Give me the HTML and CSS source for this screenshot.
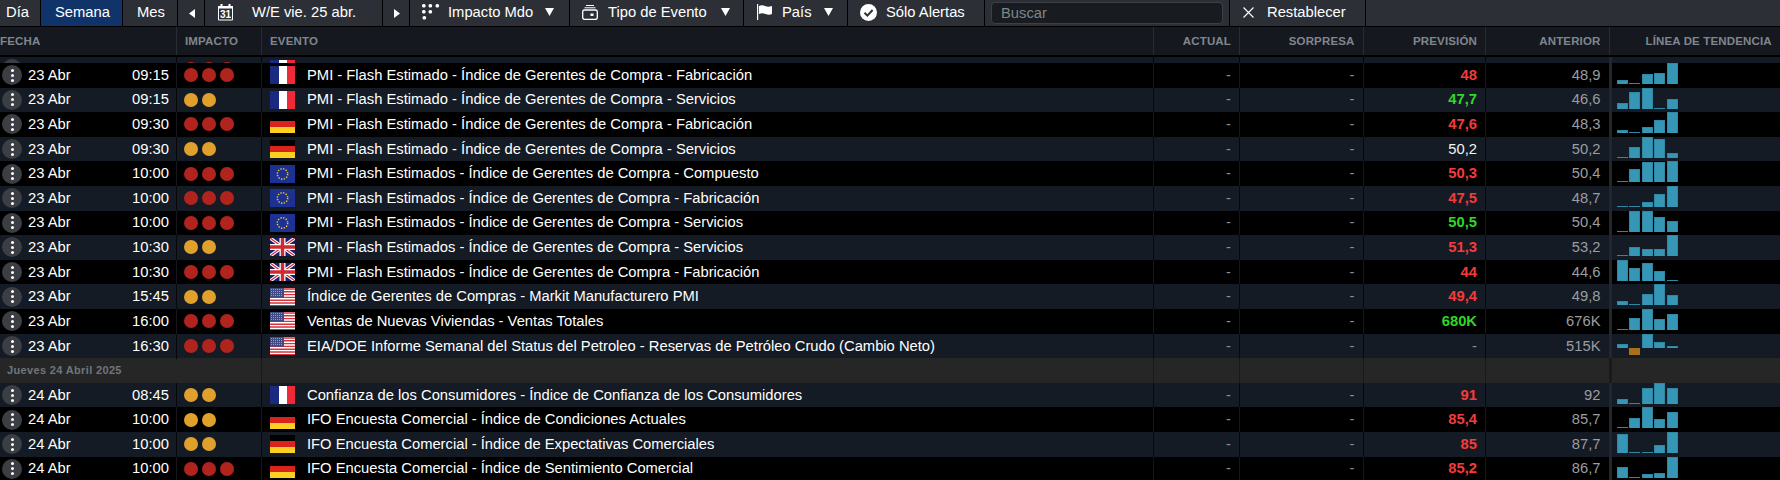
FILE: index.html
```html
<!DOCTYPE html>
<html lang="es">
<head>
    <meta charset="UTF-8">
    <title>Calendario Económico</title>
    <link rel="stylesheet" href="styles.css">
</head>
<body>
<!-- flag and icon symbols -->
<svg class="defs" width="0" height="0">
    <symbol id="fr" viewBox="0 0 25 18"><rect width="9" height="18" fill="#1a2a80"/><rect x="9" width="8" height="18" fill="#fff"/><rect x="17" width="8" height="18" fill="#ee2a39"/></symbol>
    <symbol id="de" viewBox="0 0 25 18"><rect width="25" height="6" fill="#000"/><rect y="6" width="25" height="6" fill="#d8241a"/><rect y="12" width="25" height="6" fill="#fcd022"/></symbol>
    <symbol id="eu" viewBox="0 0 25 18"><rect width="25" height="18" fill="#1c3192"/><circle cx="12.5" cy="9" r="5.2" fill="none" stroke="#f5c91f" stroke-width="1.5" stroke-dasharray="1.3 1.42"/></symbol>
    <symbol id="uk" viewBox="0 0 25 18"><rect width="25" height="18" fill="#1a1f6e"/><path d="M0 0L25 18M25 0L0 18" stroke="#fff" stroke-width="3.4"/><path d="M0 0L25 18M25 0L0 18" stroke="#cf2a30" stroke-width="1.2"/><path d="M12.5 0V18M0 9H25" stroke="#fff" stroke-width="6"/><path d="M12.5 0V18M0 9H25" stroke="#cf2a30" stroke-width="3.4"/></symbol>
    <symbol id="us" viewBox="0 0 25 18"><rect width="25" height="18" fill="#fff"/><path d="M0 1H25M0 3.8H25M0 6.6H25M0 9.4H25M0 12.2H25M0 15H25M0 17.6H25" stroke="#d0343c" stroke-width="1.4"/><rect width="14" height="9.6" fill="#3f4a86"/><path d="M1 1.5H13M1 3.5H13M1 5.5H13M1 7.5H13" stroke="#a9aecb" stroke-width=".8" stroke-dasharray="1 1"/></symbol>
    <symbol id="tri" viewBox="0 0 9 8"><path d="M0 0H9L4.5 8Z" fill="#fff"/></symbol>
</svg>

<div class="toolbar">
    <div class="tb-item">Día</div>
    <div class="tb-item tb-active">Semana</div>
    <div class="tb-item">Mes</div>
    <div class="tb-item tb-arrow"><svg width="6" height="9" viewBox="0 0 6 9"><path d="M6 0V9L0 4.5Z" fill="#fff"/></svg></div>
    <div class="tb-item tb-date">
        <svg class="tb-icon" width="17" height="18" viewBox="0 0 17 18"><path d="M1.5 3.5H15.5V17H1.5Z" fill="none" stroke="#fff"/><path d="M1 3H16V5.5H1ZM3.5 1H5.5V3H3.5ZM11.5 1H13.5V3H11.5Z" fill="#fff"/><text x="8.5" y="15.4" class="cal-num">31</text></svg>
        <span>W/E vie. 25 abr.</span>
    </div>
    <div class="tb-item tb-arrow"><svg width="6" height="9" viewBox="0 0 6 9"><path d="M0 0V9L6 4.5Z" fill="#fff"/></svg></div>
    <div class="tb-item tb-impact">
        <svg class="tb-icon" width="18" height="16" viewBox="0 0 18 16" fill="#fff"><rect x="0" y="0" width="3.6" height="3.6" rx="1.5"/><rect x="6.5" y="0" width="3.6" height="3.6" rx="1.5"/><rect x="13.5" y="0" width="3.6" height="3.6" rx="1.5"/><rect x="0" y="6" width="3.6" height="3.6" rx="1.5"/><rect x="6.5" y="6" width="3.6" height="3.6" rx="1.5"/><rect x="0.5" y="12" width="3.6" height="3.6" rx="1.5"/></svg>
        <span>Impacto Mdo</span>
        <svg class="tri" width="9" height="8"><use href="#tri"/></svg>
    </div>
    <div class="tb-item tb-type">
        <svg class="tb-icon" width="16" height="15" viewBox="0 0 16 15" fill="none" stroke="#fff"><path d="M4 .5H12M2.5 2.8H13.5"/><rect x=".7" y="5" width="14.6" height="9.4" rx="1.8" stroke-width="1.3"/><rect x="8.5" y="8.5" width="3" height="2.5" fill="#fff" stroke="none"/></svg>
        <span>Tipo de Evento</span>
        <svg class="tri" width="9" height="8"><use href="#tri"/></svg>
    </div>
    <div class="tb-item tb-country">
        <svg class="tb-icon" width="17" height="16" viewBox="0 0 17 16"><path d="M1 0H2.2V16H1Z" fill="#fff"/><path d="M3 2Q6 .5 9 2T16 2V10Q13 11.5 9.5 10T3 10Z" fill="#fff"/></svg>
        <span>País</span>
        <svg class="tri" width="9" height="8"><use href="#tri"/></svg>
    </div>
    <div class="tb-item tb-alerts">
        <svg class="tb-icon" width="17" height="17" viewBox="0 0 17 17"><circle cx="8.5" cy="8.5" r="8.5" fill="#fff"/><path d="M4.5 8.7L7.4 11.6L12.6 6" fill="none" stroke="#2c3036" stroke-width="2"/></svg>
        <span>Sólo Alertas</span>
    </div>
    <div class="tb-search"><div class="search-box">Buscar</div></div>
    <div class="tb-item tb-reset">
        <svg class="tb-icon" width="11" height="11" viewBox="0 0 11 11"><path d="M.5 .5L10.5 10.5M10.5 .5L.5 10.5" stroke="#fff" stroke-width="1.1"/></svg>
        <span>Restablecer</span>
    </div>
</div>

<div class="table-head row-grid">
    <div class="th">Fecha</div>
    <div class="th th-impact">Impacto</div>
    <div class="th th-event">Evento</div>
    <div class="th th-num">Actual</div>
    <div class="th th-num">Sorpresa</div>
    <div class="th th-num">Previsión</div>
    <div class="th th-num">Anterior</div>
    <div class="th th-trend">Línea de Tendencia</div>
</div>

<div class="table-body">
    <div class="row row-grid alt cut">
        <div class="c-date"><span class="menu"><i></i></span></div>
        <div class="c-impact"><b class="red"></b><b class="red"></b><b class="red"></b></div>
        <div class="c-event"><svg class="flag" width="25" height="18"><use href="#fr"/></svg></div>
        <div class="c-num"></div><div class="c-num"></div><div class="c-num"></div><div class="c-num"></div>
        <div class="c-trend"><span style="height:9px"></span><span style="height:9px"></span><span style="height:9px"></span><span style="height:9px"></span><span class="neg-up" style="height:9px"></span></div>
    </div>

    <div class="row row-grid">
        <div class="c-date"><span class="menu"><i></i></span><span class="day">23 Abr</span><span class="time">09:15</span></div>
        <div class="c-impact"><b class="red"></b><b class="red"></b><b class="red"></b></div>
        <div class="c-event"><svg class="flag" width="25" height="18"><use href="#fr"/></svg><span>PMI - Flash Estimado - Índice de Gerentes de Compra - Fabricación</span></div>
        <div class="c-num dash">-</div><div class="c-num dash">-</div><div class="c-num neg">48</div><div class="c-num prev">48,9</div>
        <div class="c-trend"><span style="height:4px"></span><span style="height:1px"></span><span style="height:10px"></span><span style="height:11px"></span><span style="height:21px"></span></div>
    </div>
    <div class="row row-grid alt">
        <div class="c-date"><span class="menu"><i></i></span><span class="day">23 Abr</span><span class="time">09:15</span></div>
        <div class="c-impact"><b class="amber"></b><b class="amber"></b></div>
        <div class="c-event"><svg class="flag" width="25" height="18"><use href="#fr"/></svg><span>PMI - Flash Estimado - Índice de Gerentes de Compra - Servicios</span></div>
        <div class="c-num dash">-</div><div class="c-num dash">-</div><div class="c-num pos">47,7</div><div class="c-num prev">46,6</div>
        <div class="c-trend"><span style="height:6px"></span><span style="height:17px"></span><span style="height:21px"></span><span style="height:1px"></span><span style="height:10px"></span></div>
    </div>
    <div class="row row-grid">
        <div class="c-date"><span class="menu"><i></i></span><span class="day">23 Abr</span><span class="time">09:30</span></div>
        <div class="c-impact"><b class="red"></b><b class="red"></b><b class="red"></b></div>
        <div class="c-event"><svg class="flag" width="25" height="18"><use href="#de"/></svg><span>PMI - Flash Estimado - Índice de Gerentes de Compra - Fabricación</span></div>
        <div class="c-num dash">-</div><div class="c-num dash">-</div><div class="c-num neg">47,6</div><div class="c-num prev">48,3</div>
        <div class="c-trend"><span style="height:3px"></span><span style="height:1px"></span><span style="height:6px"></span><span style="height:13px"></span><span style="height:21px"></span></div>
    </div>
    <div class="row row-grid alt">
        <div class="c-date"><span class="menu"><i></i></span><span class="day">23 Abr</span><span class="time">09:30</span></div>
        <div class="c-impact"><b class="amber"></b><b class="amber"></b></div>
        <div class="c-event"><svg class="flag" width="25" height="18"><use href="#de"/></svg><span>PMI - Flash Estimado - Índice de Gerentes de Compra - Servicios</span></div>
        <div class="c-num dash">-</div><div class="c-num dash">-</div><div class="c-num same">50,2</div><div class="c-num prev">50,2</div>
        <div class="c-trend"><span style="height:1px"></span><span style="height:11px"></span><span style="height:21px"></span><span style="height:19px"></span><span style="height:5px"></span></div>
    </div>
    <div class="row row-grid">
        <div class="c-date"><span class="menu"><i></i></span><span class="day">23 Abr</span><span class="time">10:00</span></div>
        <div class="c-impact"><b class="red"></b><b class="red"></b><b class="red"></b></div>
        <div class="c-event"><svg class="flag" width="25" height="18"><use href="#eu"/></svg><span>PMI - Flash Estimados - Índice de Gerentes de Compra - Compuesto</span></div>
        <div class="c-num dash">-</div><div class="c-num dash">-</div><div class="c-num neg">50,3</div><div class="c-num prev">50,4</div>
        <div class="c-trend"><span style="height:1px"></span><span style="height:13px"></span><span style="height:20px"></span><span style="height:20px"></span><span style="height:21px"></span></div>
    </div>
    <div class="row row-grid alt">
        <div class="c-date"><span class="menu"><i></i></span><span class="day">23 Abr</span><span class="time">10:00</span></div>
        <div class="c-impact"><b class="red"></b><b class="red"></b><b class="red"></b></div>
        <div class="c-event"><svg class="flag" width="25" height="18"><use href="#eu"/></svg><span>PMI - Flash Estimados - Índice de Gerentes de Compra - Fabricación</span></div>
        <div class="c-num dash">-</div><div class="c-num dash">-</div><div class="c-num neg">47,5</div><div class="c-num prev">48,7</div>
        <div class="c-trend"><span style="height:1px"></span><span style="height:1px"></span><span style="height:5px"></span><span style="height:13px"></span><span style="height:21px"></span></div>
    </div>
    <div class="row row-grid">
        <div class="c-date"><span class="menu"><i></i></span><span class="day">23 Abr</span><span class="time">10:00</span></div>
        <div class="c-impact"><b class="red"></b><b class="red"></b><b class="red"></b></div>
        <div class="c-event"><svg class="flag" width="25" height="18"><use href="#eu"/></svg><span>PMI - Flash Estimados - Índice de Gerentes de Compra - Servicios</span></div>
        <div class="c-num dash">-</div><div class="c-num dash">-</div><div class="c-num pos">50,5</div><div class="c-num prev">50,4</div>
        <div class="c-trend"><span style="height:1px"></span><span style="height:21px"></span><span style="height:21px"></span><span style="height:15px"></span><span style="height:11px"></span></div>
    </div>
    <div class="row row-grid alt">
        <div class="c-date"><span class="menu"><i></i></span><span class="day">23 Abr</span><span class="time">10:30</span></div>
        <div class="c-impact"><b class="amber"></b><b class="amber"></b></div>
        <div class="c-event"><svg class="flag" width="25" height="18"><use href="#uk"/></svg><span>PMI - Flash Estimados - Índice de Gerentes de Compra - Servicios</span></div>
        <div class="c-num dash">-</div><div class="c-num dash">-</div><div class="c-num neg">51,3</div><div class="c-num prev">53,2</div>
        <div class="c-trend"><span style="height:1px"></span><span style="height:9px"></span><span style="height:7px"></span><span style="height:7px"></span><span style="height:21px"></span></div>
    </div>
    <div class="row row-grid">
        <div class="c-date"><span class="menu"><i></i></span><span class="day">23 Abr</span><span class="time">10:30</span></div>
        <div class="c-impact"><b class="red"></b><b class="red"></b><b class="red"></b></div>
        <div class="c-event"><svg class="flag" width="25" height="18"><use href="#uk"/></svg><span>PMI - Flash Estimados - Índice de Gerentes de Compra - Fabricación</span></div>
        <div class="c-num dash">-</div><div class="c-num dash">-</div><div class="c-num neg">44</div><div class="c-num prev">44,6</div>
        <div class="c-trend"><span style="height:21px"></span><span style="height:13px"></span><span style="height:18px"></span><span style="height:10px"></span><span style="height:1px"></span></div>
    </div>
    <div class="row row-grid alt">
        <div class="c-date"><span class="menu"><i></i></span><span class="day">23 Abr</span><span class="time">15:45</span></div>
        <div class="c-impact"><b class="amber"></b><b class="amber"></b></div>
        <div class="c-event"><svg class="flag" width="25" height="18"><use href="#us"/></svg><span>Índice de Gerentes de Compras - Markit Manufacturero PMI</span></div>
        <div class="c-num dash">-</div><div class="c-num dash">-</div><div class="c-num neg">49,4</div><div class="c-num prev">49,8</div>
        <div class="c-trend"><span style="height:4px"></span><span style="height:1px"></span><span style="height:11px"></span><span style="height:21px"></span><span style="height:10px"></span></div>
    </div>
    <div class="row row-grid">
        <div class="c-date"><span class="menu"><i></i></span><span class="day">23 Abr</span><span class="time">16:00</span></div>
        <div class="c-impact"><b class="red"></b><b class="red"></b><b class="red"></b></div>
        <div class="c-event"><svg class="flag" width="25" height="18"><use href="#us"/></svg><span>Ventas de Nuevas Viviendas - Ventas Totales</span></div>
        <div class="c-num dash">-</div><div class="c-num dash">-</div><div class="c-num pos">680K</div><div class="c-num prev">676K</div>
        <div class="c-trend"><span style="height:1px"></span><span style="height:12px"></span><span style="height:21px"></span><span style="height:11px"></span><span style="height:16px"></span></div>
    </div>
    <div class="row row-grid alt">
        <div class="c-date"><span class="menu"><i></i></span><span class="day">23 Abr</span><span class="time">16:30</span></div>
        <div class="c-impact"><b class="red"></b><b class="red"></b><b class="red"></b></div>
        <div class="c-event"><svg class="flag" width="25" height="18"><use href="#us"/></svg><span>EIA/DOE Informe Semanal del Status del Petroleo - Reservas de Petróleo Crudo (Cambio Neto)</span></div>
        <div class="c-num dash">-</div><div class="c-num dash">-</div><div class="c-num dash">-</div><div class="c-num prev">515K</div>
        <div class="c-trend c-trend-mixed"><span style="height:4px"></span><span class="below" style="height:7px"></span><span style="height:14px"></span><span style="height:6px"></span><span style="height:2px"></span></div>
    </div>

    <div class="row row-grid group">
        <div class="group-title">Jueves 24 Abril 2025</div>
        <div class="c-event"></div>
        <div class="c-num"></div><div class="c-num"></div><div class="c-num"></div><div class="c-num"></div>
        <div class="c-trend"></div>
    </div>

    <div class="row row-grid alt">
        <div class="c-date"><span class="menu"><i></i></span><span class="day">24 Abr</span><span class="time">08:45</span></div>
        <div class="c-impact"><b class="amber"></b><b class="amber"></b></div>
        <div class="c-event"><svg class="flag" width="25" height="18"><use href="#fr"/></svg><span>Confianza de los Consumidores - Índice de Confianza de los Consumidores</span></div>
        <div class="c-num dash">-</div><div class="c-num dash">-</div><div class="c-num neg">91</div><div class="c-num prev">92</div>
        <div class="c-trend"><span style="height:5px"></span><span style="height:1px"></span><span style="height:16px"></span><span style="height:21px"></span><span style="height:16px"></span></div>
    </div>
    <div class="row row-grid">
        <div class="c-date"><span class="menu"><i></i></span><span class="day">24 Abr</span><span class="time">10:00</span></div>
        <div class="c-impact"><b class="amber"></b><b class="amber"></b></div>
        <div class="c-event"><svg class="flag" width="25" height="18"><use href="#de"/></svg><span>IFO Encuesta Comercial - Índice de Condiciones Actuales</span></div>
        <div class="c-num dash">-</div><div class="c-num dash">-</div><div class="c-num neg">85,4</div><div class="c-num prev">85,7</div>
        <div class="c-trend"><span style="height:1px"></span><span style="height:10px"></span><span style="height:21px"></span><span style="height:9px"></span><span style="height:16px"></span></div>
    </div>
    <div class="row row-grid alt">
        <div class="c-date"><span class="menu"><i></i></span><span class="day">24 Abr</span><span class="time">10:00</span></div>
        <div class="c-impact"><b class="amber"></b><b class="amber"></b></div>
        <div class="c-event"><svg class="flag" width="25" height="18"><use href="#de"/></svg><span>IFO Encuesta Comercial - Índice de Expectativas Comerciales</span></div>
        <div class="c-num dash">-</div><div class="c-num dash">-</div><div class="c-num neg">85</div><div class="c-num prev">87,7</div>
        <div class="c-trend"><span style="height:19px"></span><span style="height:1px"></span><span style="height:1px"></span><span style="height:8px"></span><span style="height:21px"></span></div>
    </div>
    <div class="row row-grid">
        <div class="c-date"><span class="menu"><i></i></span><span class="day">24 Abr</span><span class="time">10:00</span></div>
        <div class="c-impact"><b class="red"></b><b class="red"></b><b class="red"></b></div>
        <div class="c-event"><svg class="flag" width="25" height="18"><use href="#de"/></svg><span>IFO Encuesta Comercial - Índice de Sentimiento Comercial</span></div>
        <div class="c-num dash">-</div><div class="c-num dash">-</div><div class="c-num neg">85,2</div><div class="c-num prev">86,7</div>
        <div class="c-trend"><span style="height:11px"></span><span style="height:1px"></span><span style="height:4px"></span><span style="height:5px"></span><span style="height:21px"></span></div>
    </div>
</div>
</body>
</html>
```
FILE: styles.css
```css
* {
    box-sizing: border-box;
}

html, body {
    height: 100%;
}

body {
    margin: 0;
    overflow: hidden;
    background-color: #000;
    color: #fff;
    font-family: "Liberation Sans", Arial, sans-serif;
    font-size: 14.75px;
}

.defs {
    position: absolute;
}

/* Top toolbar */
.toolbar {
    display: flex;
    height: 27px;
    background-color: #2c3036;
    border-bottom: 1px solid #000;
}

.tb-item {
    display: flex;
    align-items: center;
    height: 26px;
    padding-left: 6px;
    padding-bottom: 2px;
    border-right: 1px solid #000;
}

.tb-active {
    width: 82px;
    padding-left: 14px;
    background-color: #10346a;
}

.tb-item:nth-child(1) { width: 41px; }
.tb-item:nth-child(3) { width: 55px; padding-left: 14px; }
.tb-arrow { width: 27px; padding-left: 11px; padding-bottom: 0; }
.tb-date { width: 178px; padding-left: 12px; }
.tb-date span { margin-left: 18px; }
.tb-impact { width: 160px; padding-left: 12px; }
.tb-impact span { margin-left: 8px; }
.tb-impact .tri { margin-left: 12px; }
.tb-type { width: 174px; padding-left: 12px; }
.tb-type span { margin-left: 10px; }
.tb-type .tri { margin-left: 14px; }
.tb-country { width: 104px; padding-left: 12px; }
.tb-country span { margin-left: 9px; }
.tb-country .tri { margin-left: 12px; }
.tb-alerts { width: 137px; padding-left: 12px; }
.tb-alerts span { margin-left: 9px; }
.tb-reset { width: 136px; padding-left: 13px; }
.tb-reset span { margin-left: 13px; }

.tb-icon {
    flex: none;
}

.cal-num {
    fill: #fff;
    font-family: "Liberation Sans", Arial, sans-serif;
    font-size: 10px;
    font-weight: bold;
    text-anchor: middle;
}

.tb-search {
    width: 245px;
    height: 26px;
    padding: 2px 6px 2px 6px;
    border-right: 1px solid #000;
}

.search-box {
    height: 22px;
    padding: 2px 9px;
    background-color: #181b1f;
    border: 1px solid #3c4046;
    border-radius: 4px;
    color: #80858b;
}

/* Column layout shared by the head and every row */
.row-grid {
    display: grid;
    grid-template-columns: 176px 85px 892px 86px 123.5px 122.5px 123.5px 1fr;
}

.table-head {
    height: 30px;
    background-color: #15191f;
    border-bottom: 2px solid #000;
}

.th {
    padding: 8px 8px 0 0;
    border-left: 1px solid #292d33;
    color: #80868f;
    font-size: 11.5px;
    font-weight: bold;
    letter-spacing: .15px;
    text-transform: uppercase;
    white-space: nowrap;
}

.th:first-child {
    border-left: none;
    padding-left: 0;
}

.th-impact { padding-left: 8px; }
.th-event { padding-left: 8px; }
.th-num { text-align: right; }
.th-trend { padding-left: 36px; }

/* Table rows */
.table-body {
    overflow: hidden;
}

.row {
    height: 24.6px;
    background-color: #000;
}

.row.alt {
    background-color: #141b24;
}

.row.cut {
    height: 6px;
    overflow: hidden;
    align-items: end;
}

.row > div {
    display: flex;
    align-items: center;
    height: 100%;
    border-left: 1px solid #14181e;
}

.row.alt > div {
    border-left-color: #06080b;
}

.row > div:first-child {
    border-left: none;
}

.row.cut > div {
    height: 24.6px;
}

.c-date {
    padding-left: 2px;
}

.menu {
    display: flex;
    flex: none;
    align-items: center;
    justify-content: center;
    width: 20px;
    height: 20px;
    border-radius: 50%;
    background-color: #3b3f44;
}

.menu i {
    width: 3px;
    height: 3px;
    border-radius: 50%;
    background-color: #fff;
    box-shadow: 0 -5px 0 #fff, 0 5px 0 #fff;
}

.day {
    margin-left: 6px;
    margin-bottom: 1px;
}

.time {
    margin-left: auto;
    margin-bottom: 1px;
    padding-right: 7px;
}

.c-impact {
    gap: 4px;
    padding-left: 7px;
}

.c-impact b {
    width: 14px;
    height: 14px;
    border-radius: 50%;
}

.c-impact .red { background-color: #b1241e; }
.c-impact .amber { background-color: #e0a02c; }

.c-event {
    padding-left: 8px;
}

.c-event span {
    margin-bottom: 1px;
}

.flag {
    flex: none;
    margin-right: 12px;
}

.c-num {
    justify-content: flex-end;
    padding-right: 8px;
    padding-bottom: 1px;
}

.dash {
    color: #8a8f95;
}

.neg { color: #f43b3b; font-weight: bold; }
.pos { color: #2fd827; font-weight: bold; }
.same { color: #f2f2f2; }
.prev { color: #9a9da1; }

/* Small bar chart at the end of each row */
.row > .c-trend {
    gap: 1.4px;
    align-items: flex-end;
    padding: 0 0 3.6px 5.5px;
    border-left: 3px solid #23272d;
}

.row.alt > .c-trend {
    border-left-color: #23272d;
}

.c-trend span {
    width: 11px;
    background-color: #3596b5;
    border: 1px solid #2f87a4;
    border-bottom: none;
}

.c-trend .neg-up {
    background-color: #a8701c;
    border-color: #a8701c;
}

.row > .c-trend-mixed {
    padding-bottom: 11px;
}

.c-trend .below {
    margin-bottom: -7px;
    background-color: #a8701c;
    border: none;
}

/* Date group row */
.row.group {
    background-color: #262626;
    font-size: 11px;
}

.group-title {
    grid-column: 1 / 3;
    padding-left: 7px;
    color: #71757c;
    font-weight: bold;
    letter-spacing: .35px;
}

.row.group > div {
    border-left-color: #1a1a1a;
}
```
